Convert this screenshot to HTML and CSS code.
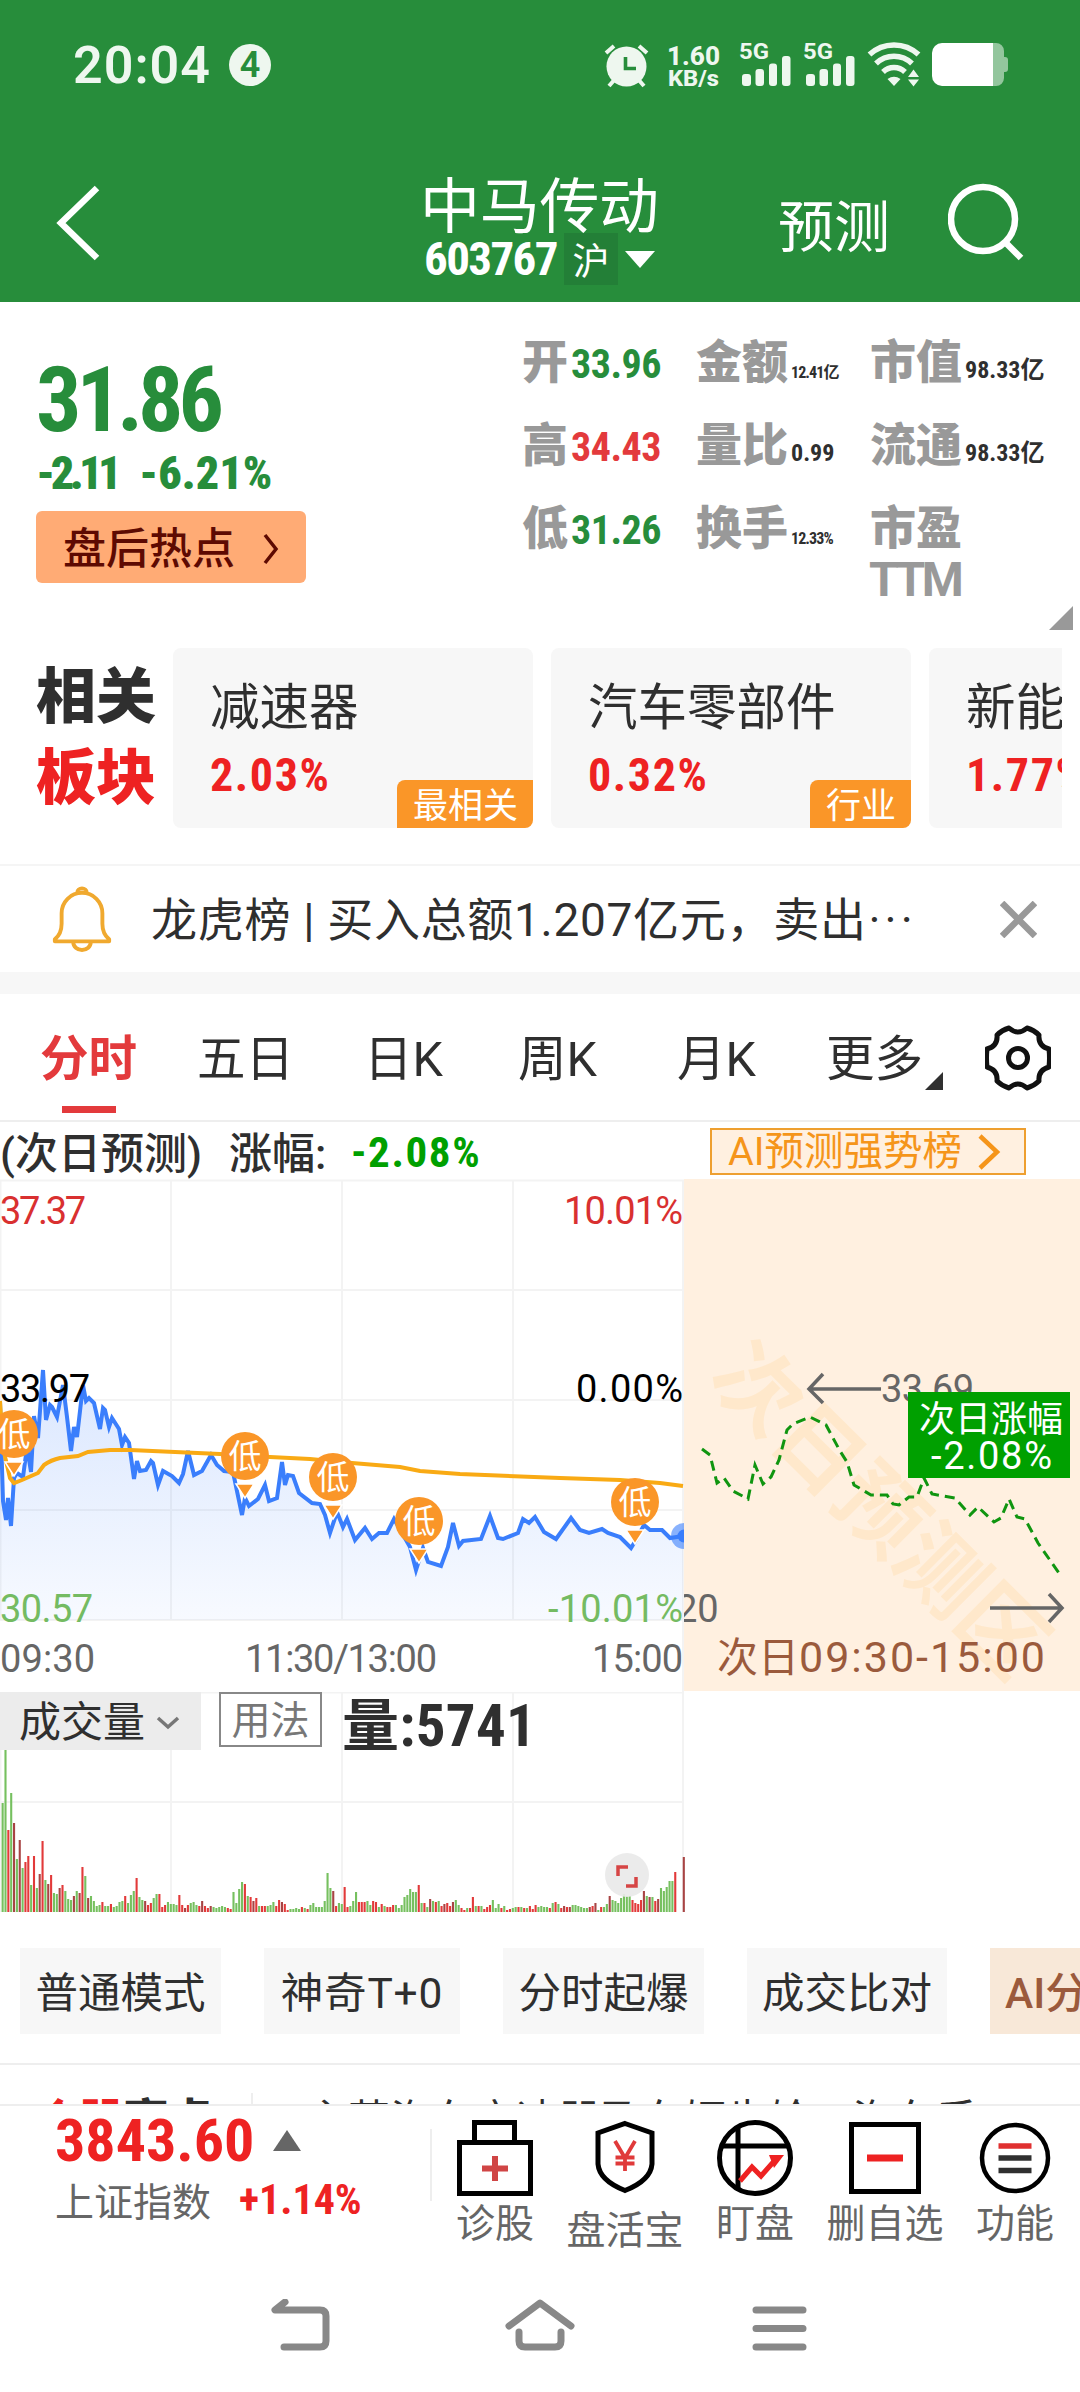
FILE: index.html
```html
<!DOCTYPE html>
<html lang="zh-CN">
<head>
<meta charset="utf-8">
<title>中马传动 603767</title>
<link rel="stylesheet" href="styles.css">
</head>
<body>
<header class="top">
  <div class="status">
    <span class="clock">20:04</span>
    <span class="count">4</span>
    <svg class="status-icons" width="440" height="70" viewBox="0 0 440 70" fill="#eef7ef">
      <circle cx="36.500" cy="36.500" r="20"/>
      <path d="M16 23l8-7M57 23l-8-7M19 56l7-8M54 56l-7-8" stroke="#eef7ef" stroke-width="4" fill="none"/>
      <path d="M35.500 27v11.500H46" stroke="#278d3b" stroke-width="3.600" fill="none"/>
      <text x="77" y="35" font-size="26" font-weight="800" textLength="53" lengthAdjust="spacingAndGlyphs">1.60</text>
      <text x="78" y="56" font-size="22" font-weight="800" textLength="51" lengthAdjust="spacingAndGlyphs">KB/s</text>
      <g id="sig">
        <text x="149" y="29" font-size="22" font-weight="700" textLength="30" lengthAdjust="spacingAndGlyphs">5G</text>
        <rect x="152" y="44" width="9" height="12" rx="3"/><rect x="165.500" y="39" width="8.500" height="17" rx="3"/><rect x="179" y="33.500" width="8" height="22.500" rx="3"/><rect x="192" y="26" width="8.500" height="30" rx="3"/>
      </g>
      <use href="#sig" x="64"/>
      <path d="M279.500 24.500a36 36 0 0 1 49 0M286 33.500a26 26 0 0 1 36 0M293 42a16 16 0 0 1 22 0" stroke="#eef7ef" stroke-width="5.500" fill="none"/>
      <path d="M297.500 49q6.500-4.500 13 0L304 56zM318 47l5.500-7.500L329 47zM318 49.500l5.500 7 5.500-7z"/>
      <path d="M352 13h51v43h-51a10 10 0 0 1-10-10V23a10 10 0 0 1 10-10z" fill="#fff"/>
      <path d="M403 13h3a8 8 0 0 1 8 8v6h1a3 3 0 0 1 3 3v9a3 3 0 0 1-3 3h-1v6a8 8 0 0 1-8 8h-3z" fill="#93c69d"/>
    </svg>
  </div>
  <nav class="titlebar">
    <svg class="back" width="48" height="80" viewBox="0 0 48 80"><path d="M43 5L7 40l36 35" fill="none" stroke="#fff" stroke-width="6.500"/></svg>
    <div class="stock">
      <h1>中马传动</h1>
      <div class="code"><b class="num">603767</b><span class="market">沪</span><svg width="30" height="17" viewBox="0 0 30 17"><path d="M0 0h30L15 17z" fill="#fff"/></svg></div>
    </div>
    <span class="predict">预测</span>
    <svg class="search" width="80" height="80" viewBox="0 0 80 80" fill="none" stroke="#fff" stroke-width="6.500"><circle cx="35" cy="36" r="32"/><path d="M57 59l16 16"/></svg>
  </nav>
</header>

<section class="quote">
  <div class="price">
    <b class="last num">31.86</b>
    <div class="change num"><b>-2.11</b><b>-6.21%</b></div>
    <div class="hot"><span>盘后热点</span><svg width="18" height="32" viewBox="0 0 18 32"><path d="M3 2l11 14L3 30" fill="none" stroke="#5e0a02" stroke-width="3.500"/></svg></div>
  </div>
  <div class="stats">
    <div><span>开</span><b class="num big">33.96</b></div>
    <div><span>金额</span><b class="num tiny">12.41亿</b></div>
    <div><span>市值</span><b class="num mid">98.33亿</b></div>
    <div><span>高</span><b class="num big up">34.43</b></div>
    <div><span>量比</span><b class="num mid">0.99</b></div>
    <div><span>流通</span><b class="num mid">98.33亿</b></div>
    <div><span>低</span><b class="num big">31.26</b></div>
    <div><span>换手</span><b class="num tiny">12.33%</b></div>
    <div class="ttm"><span>市盈<br><i>TTM</i></span></div>
  </div>
  <i class="corner"></i>
</section>

<section class="sectors">
  <h2>相关<em>板块</em></h2>
  <div class="cards">
    <article><p>减速器</p><b class="num">2.03%</b><span class="badge">最相关</span></article>
    <article><p>汽车零部件</p><b class="num">0.32%</b><span class="badge">行业</span></article>
    <article><p>新能源</p><b class="num">1.77%</b></article>
  </div>
</section>

<section class="notice">
  <svg width="62" height="66" viewBox="0 0 62 68" fill="none" stroke="#f0a92f" stroke-width="4"><path d="M3 55c5-4 7-9 7-16V28a21 21 0 0 1 42 0v11c0 7 2 12 7 16v2H3zM22 58a9 8 0 0 0 18 0M26 7a5 4.500 0 0 1 10 0" stroke-linejoin="round"/></svg>
  <span>龙虎榜 | 买入总额1.207亿元，卖出<i>···</i></span>
  <svg width="37" height="37" viewBox="0 0 37 37"><path d="M2 2l33 33M35 2L2 35" stroke="#999" stroke-width="6.500"/></svg>
</section>

<nav class="tabs">
  <span class="on">分时</span><span>五日</span><span>日K</span><span>周K</span><span>月K</span><span class="more">更多</span>
  <svg width="66" height="66" viewBox="0 0 66 66" fill="none" stroke="#111" stroke-width="5" stroke-linejoin="round"><path d="M24 3Q33 11 42 3Q49 5 54 10Q53 21 64 24Q65 33 64 42Q53 45 54 56Q49 61 42 63Q33 55 24 63Q17 61 12 56Q13 45 2 42Q1 33 2 24Q13 21 12 10Q17 5 24 3Z"/><circle cx="33" cy="33" r="9.500"/></svg>
</nav>

<section class="forecast">
  <span class="fl">(次日预测)</span><span class="fr">涨幅:</span><b class="num">-2.08%</b>
  <div class="rank">AI预测强势榜<svg width="24" height="36" viewBox="0 0 24 36"><path d="M3 2l17 16L3 34" fill="none" stroke="#f5951a" stroke-width="4.500"/></svg></div>
</section>

<svg class="chart" width="1080" height="513" viewBox="0 1179 1080 513">
  <defs>
    <linearGradient id="fade" x1="0" y1="1380" x2="0" y2="1620" gradientUnits="userSpaceOnUse"><stop offset="0" stop-color="#3a7efc" stop-opacity=".18"/><stop offset="1" stop-color="#3a7efc" stop-opacity=".04"/></linearGradient>
    <clipPath id="plot"><rect x="0" y="1179" width="684" height="513"/></clipPath>
    <clipPath id="next"><rect x="684" y="1179" width="396" height="513"/></clipPath>
    <g id="low"><path d="M-9 28H9L0 42z" fill="#fa9628" stroke="#fff" stroke-width="1.500"/><circle r="24" fill="#fa9628"/><text y="12" font-size="33" text-anchor="middle" fill="#fff">低</text></g>
  </defs>
  <path d="M0 1180.500H684M0 1290H684M0 1400H684M0 1510H684M0 1620H684M.500 1180V1620M171 1180V1620M342 1180V1620M513 1180V1620M683 1180V1692" stroke="#f3f3f3" stroke-width="2"/>
  <rect x="684" y="1179" width="396" height="512" fill="#fff0e0"/>
  <g clip-path="url(#next)"><text class="mark" transform="translate(881 1509) rotate(44.800)" text-anchor="middle" y="32" font-size="86" fill="#ffe8cb">次日预测区</text></g>
  <g clip-path="url(#plot)">
    <path id="area" fill="url(#fade)"/>
    <polyline id="line" fill="none" stroke="#3a7efc" stroke-width="4" points="0,1401 3,1501 6,1520 8,1498 11,1526 14,1478 17,1473 23,1477 27,1447 31,1472 34,1416 38,1438 43,1370 46,1420 50,1405 52,1407 57,1417 63,1385 67,1417 71,1451 74,1427 77,1437 83,1385 86,1401 89,1398 94,1403 100,1429 103,1408 105,1410 109,1427 112,1418 119,1429 122,1445 125,1437 129,1443 134,1479 137,1461 140,1471 146,1470 151,1461 153,1463 158,1485 163,1471 172,1476 179,1483 183,1474 188,1451 194,1475 202,1471 211,1455 217,1465 224,1471 233,1472 242,1515 245,1498 249,1506 258,1499 265,1485 269,1501 277,1498 282,1462 285,1485 288,1475 293,1476 299,1493 312,1503 320,1504 325,1515 330,1533 337,1512 343,1527 347,1519 355,1540 365,1528 372,1539 379,1533 387,1533 394,1519 402,1533 410,1547 416,1570 423,1548 428,1562 441,1566 448,1547 453,1523 459,1546 463,1541 481,1539 490,1516 498,1538 503,1539 518,1533 523,1519 529,1523 535,1517 544,1532 556,1539 571,1518 580,1530 589,1533 602,1529 608,1533 620,1537 631,1548 636,1540 644,1525 650,1530 662,1530 670,1538 683,1536"/>
    <path d="M0 1401L3 1448 10 1478 14 1483 22 1480 38 1473 44 1465Q51 1460 60 1458L78 1456 88 1452 110 1450H130L220 1454 270 1457 310 1459 352 1463 400 1467 420 1471 460 1474 560 1478 620 1480 660 1483 683 1486" fill="none" stroke="#f9aa14" stroke-width="4"/>
    <circle cx="684" cy="1536" r="13" fill="#3a7efc" opacity=".6"/><circle cx="684" cy="1536" r="6.500" fill="#3a7efc"/>
    <use href="#low" x="14" y="1434"/><use href="#low" x="245" y="1456"/><use href="#low" x="333" y="1477"/><use href="#low" x="419" y="1521"/><use href="#low" x="635" y="1502"/>
  </g>
  <g class="axis" font-size="38">
    <text x="0" y="1224" textLength="86" fill="#d93030">37.37</text><text x="564" y="1224" textLength="119" fill="#d93030">10.01%</text>
    <text x="0" y="1402" textLength="90" fill="#000">33.97</text><text x="576" y="1402" textLength="107" fill="#000">0.00%</text>
    <text x="0" y="1622" textLength="93" fill="#74bb62">30.57</text><text x="548" y="1622" textLength="135" fill="#74bb62">-10.01%</text>
    <g fill="#666"><text x="0" y="1672" textLength="95">09:30</text><text x="245" y="1672" textLength="192">11:30/13:00</text><text x="592" y="1672" textLength="91">15:00</text>
    <text x="881" y="1402" textLength="93">33.69</text></g>
    <g clip-path="url(#next)"><text x="676" y="1622" fill="#666">20</text></g>
  </g>
  <path d="M881 1389H810M823 1374L809 1389 823 1403M990 1608H1061M1049 1594L1062 1608 1049 1622" fill="none" stroke="#666" stroke-width="3.500"/>
  <polyline fill="none" stroke="#109510" stroke-width="3" stroke-dasharray="10 6" points="702,1449 710,1455 717,1483 724,1478 733,1491 748,1499 755,1465 763,1484 771,1477 779,1460 787,1430 793,1424 810,1417 826,1425 840,1451 847,1462 854,1485 871,1495 887,1495 893,1504 899,1505 909,1497 917,1497 924,1478 932,1494 955,1498 970,1515 978,1507 994,1522 1001,1518 1009,1499 1017,1517 1025,1519 1038,1543 1061,1576"/>
  <rect x="908" y="1392" width="162" height="86" fill="#00a000"/>
  <text x="991" y="1432" font-size="36" text-anchor="middle" fill="#fff">次日涨幅</text>
  <text x="931" y="1469" font-size="38" textLength="121" fill="#fff">-2.08%</text>
  <text x="717" y="1672" font-size="43" fill="#9b5a3c"><tspan font-size="41">次日</tspan><tspan textLength="246">09:30-15:00</tspan></text>
</svg>

<section class="volume">
  <svg width="1080" height="222" viewBox="0 1692 1080 222">
    <path d="M0 1692.500H684M0 1802H684M.500 1692V1912M171 1692V1912M342 1692V1912M513 1692V1912M683 1692V1912" stroke="#f3f3f3" stroke-width="2"/>
    <g id="bars"></g>
    <circle cx="627" cy="1875" r="22" fill="#e9e9e9" opacity=".92"/>
    <path d="M618 1876V1867H628M636 1877V1886H626" fill="none" stroke="#d64545" stroke-width="3.500"/>
  </svg>
  <div class="tools">
    <span class="pick">成交量<svg width="24" height="14" viewBox="0 0 24 14"><path d="M2 2l10 9L22 2" fill="none" stroke="#777" stroke-width="3.500"/></svg></span>
    <span class="usage">用法</span>
    <b class="vol num"><i>量</i>:5741</b>
  </div>
</section>

<div class="modes"><span>普通模式</span><span class="t0">神奇T+0</span><span>分时起爆</span><span>成交比对</span><span class="ai">AI分时</span></div>

<section class="highlight"><b><em>个股</em>亮点</b><span>主营汽车变速器及车辆齿轮，汽车手</span></section>

<footer class="dock">
  <div class="index">
    <div><b class="num value">3843.60</b><svg width="28" height="21" viewBox="0 0 28 21"><path d="M14 0l14 21H0z" fill="#666"/></svg></div>
    <div><span>上证指数</span><b class="num pct">+1.14%</b></div>
  </div>
  <div class="actions">
    <a><svg width="76" height="76" viewBox="0 0 76 76" fill="none" stroke="#000" stroke-width="5"><path d="M2.500 22.500h71v51h-71zM17.500 22V2.500h40V22"/><path d="M38 36v25M25 48.500h26" stroke="#d04545" stroke-width="6"/></svg>诊股</a>
    <a class="low"><svg width="76" height="76" viewBox="0 0 76 76" fill="none" stroke="#000" stroke-width="5"><path d="M38 3.500L65 13v31C64 56 52 65 38 70.500C24 65 12 56 11 44V13z"/><path d="M28 21l10 17 10-17M38 38v13M28.500 37.500h19M28.500 43.500h19" stroke="#e03a3a" stroke-width="3.800"/></svg>盘活宝</a>
    <a><svg width="76" height="76" viewBox="0 0 76 76" fill="none" stroke="#000" stroke-width="5"><circle cx="38" cy="38" r="35.500"/><path d="M21 7v62M6 26h65"/><path d="M23 61l12-14 9 9 15-17" stroke="#ee2222"/><path d="M52 35h15L57 48z" fill="#ee2222" stroke="none"/></svg>盯盘</a>
    <a><svg width="76" height="76" viewBox="0 0 76 76" fill="none" stroke="#000" stroke-width="5"><path d="M4.500 4.500h67v67h-67z"/><path d="M20 38h36" stroke="#ee2222" stroke-width="7"/></svg>删自选</a>
    <a><svg width="76" height="76" viewBox="0 0 76 76" fill="none" stroke="#000" stroke-width="4.500"><circle cx="38" cy="38" r="33"/><path d="M21.500 26h33" stroke="#e03030" stroke-width="5.500"/><path d="M21.500 38h33M21.500 50.500h33" stroke="#303030" stroke-width="5.500"/></svg>功能</a>
  </div>
</footer>

<nav class="system">
  <svg width="60" height="52" viewBox="0 0 60 52"><path d="M15 3L5 11H50q6 0 6 6V42q0 6-6 6H14" /></svg>
  <svg width="70" height="52" viewBox="0 0 70 52"><path d="M4 27L35 4 66 27M14 33V42q0 6 6 6H50q6 0 6-6V33"/></svg>
  <svg width="56" height="52" viewBox="0 0 56 52"><path d="M4 11H51M4 29.500H51M4 48H51"/></svg>
</nav>
<script src="script.js"></script>
</body>
</html>
```
FILE: script.js
```js
// One entry per minute: colour key and bar height
const volumes = `g109 g163 r82 g119 d89 g53 d72 g44 r50 r56 g27 r56 g24 d38 r71 g32 d28 r37 g19 g18
d24 r27 g21 g13 g12 d16 g21 d19 r45 g36 d14 g16 g11 g6 g7 r10 g6 g6 r8 g5
g6 g10 g11 r16 g9 g17 g21 r34 g15 g12 d11 r7 r9 g14 g18 r18 r5 r7 g10 g8
g8 g7 r17 r7 d4 r7 g9 g10 g7 r6 d11 r6 r4 d6 g5 g4 g5 g6 g5 r4
r3 g20 g9 g23 g30 r28 g16 r15 d11 r14 g6 r6 r6 g6 g7 g10 r6 r12 d10 r8
r2 g3 g3 g4 g3 r5 g4 r3 g7 g9 g5 g5 g5 g11 g39 g24 d21 r6 g9 g8
r25 r5 g6 g11 g20 r10 r10 r10 g11 g7 r11 r10 g5 r8 g6 r5 r5 r7 g7 g4
g7 g15 g17 g23 g20 g20 r27 g9 r9 g5 d13 g11 r10 g11 r6 d8 r9 r6 d10 g12
g7 r4 r2 g4 r4 r15 g6 r6 g6 r3 r5 r7 g12 g4 g8 r4 g6 r2 r3 g4
g5 r5 g5 r4 g4 r6 r3 r7 g5 g6 g5 g5 r4 g9 r10 g8 r4 d6 r5 d5
g7 g7 g6 g5 g4 g4 d5 r6 d9 g2 r5 g5 g8 d16 g12 g11 g9 g14 g18 g16
g16 r12 r9 r8 r12 d21 g16 d15 g15 r11 d13 g24 g21 g25 g31 g31 r40 g0 g0 d55`.split(/\s+/);
const colors = { g: '#76c05f', r: '#e23a3a', d: '#a84444' };
document.getElementById('bars').innerHTML = volumes.map((v, i) => {
  const h = +v.slice(1);
  return `<rect x="${(1.6 + i * 2.85).toFixed(2)}" y="${1912 - h}" width="2.1" height="${h}" fill="${colors[v[0]]}"/>`;
}).join('');
const points = document.getElementById('line').getAttribute('points').trim().split(/\s+/);
document.getElementById('area').setAttribute('d', `M0,1620 L${points.join(' L')} L683,1620Z`);
```
FILE: styles.css
```css
* { box-sizing: border-box; }
body { margin: 0; width: 1080px; height: 2392px; overflow: hidden; background: #fff; color: #2f2f2f; font-family: Roboto, "Noto Sans CJK SC", sans-serif; }
h1, h2, p { margin: 0; font-weight: 400; }
em, i { font-style: normal; }
svg { display: block; flex: none; }
.num { font-family: "Roboto Condensed", Roboto, "Noto Sans CJK SC", sans-serif; font-weight: 700; }

.top { height: 302px; background: #278d3b; color: #fff; }
.status { display: flex; align-items: center; height: 130px; padding-left: 73px; color: #eef7ef; }
.clock { width: 156px; padding-top: 2px; font-size: 52px; font-weight: 600; letter-spacing: 1px; line-height: 60px; }
.count { width: 42px; height: 42px; border-radius: 50%; background: #eef7ef; color: #278d3b; font-size: 36px; font-weight: 600; line-height: 43px; text-align: center; }
.status-icons { margin-left: 319px; }
.titlebar { display: grid; grid-template-columns: 420px 358px 170px 132px; height: 172px; }
.back { margin: 53px 0 0 54px; }
.stock h1 { margin-top: 45px; font-size: 60px; line-height: 66px; letter-spacing: -.3px; }
.code { display: flex; align-items: center; height: 52px; margin-top: -8px; padding-left: 4px; }
.code b { width: 140px; font-size: 47px; line-height: 52px; letter-spacing: -1.6px; }
.market { width: 54px; height: 52px; margin-right: 7px; background: #237f37; font-size: 37px; line-height: 59px; text-align: center; }
.predict { margin-top: 63px; font-size: 56px; line-height: 70px; }
.search { margin-top: 53px; }

.quote { position: relative; display: flex; height: 346px; }
.price { width: 523px; padding-left: 36px; }
.last { display: block; margin-top: 53px; font-size: 90px; line-height: 92px; letter-spacing: -5px; color: #278d3b; }
.change { display: flex; gap: 22px; height: 50px; margin-top: 1px; font-size: 46px; line-height: 50px; color: #278d3b; }
.change b:first-child { letter-spacing: -4.6px; }
.hot { display: flex; align-items: center; gap: 27px; width: 270px; height: 72px; margin-top: 13px; padding: 3px 0 0 27px; border-radius: 6px; background: #ffab75; color: #5e0a02; font-size: 43px; font-weight: 500; line-height: 72px; }
.stats { display: grid; grid-template-columns: 174px 174px 200px; grid-template-rows: 83px 83px 130px; margin: 30px 0 0 -1px; }
.stats div { display: flex; align-items: baseline; line-height: 60px; white-space: nowrap; }
.stats span { color: #999; font-size: 46px; font-weight: 900; }
.stats .ttm { line-height: 52px; margin-top: 4px; }
.ttm i { font-size: 48px; font-weight: 700; letter-spacing: -3.5px; margin-left: -1px; }
.big { margin-left: 3px; font-size: 40px; letter-spacing: -.5px; color: #278d3b; }
.big.up { color: #e33a3c; }
.mid { margin-left: 3px; font-size: 24px; }
.tiny { margin-left: 3px; font-size: 16px; letter-spacing: -.9px; }
.corner { position: absolute; left: 1049px; top: 304px; width: 24px; height: 24px; background: #999; clip-path: polygon(100% 0, 100% 100%, 0 100%); }

.sectors { display: flex; height: 216px; padding: 0 18px 0 36px; }
.sectors h2 { width: 137px; padding-top: 9px; font-size: 60px; font-weight: 900; line-height: 81px; }
.sectors em { display: block; color: #ee2222; }
.cards { display: flex; gap: 18px; width: 889px; height: 180px; overflow: hidden; }
.cards article { position: relative; flex: none; width: 360px; padding: 30px 0 0 37px; border-radius: 8px; background: #f7f7f7; }
.cards p { font-size: 49.5px; line-height: 60px; }
.cards b { display: block; margin-top: 9px; font-size: 46px; line-height: 56px; letter-spacing: 1.6px; color: #ee2222; }
.badge { position: absolute; right: 0; bottom: 0; height: 48px; padding: 0 15px 0 16px; border-radius: 8px 0; background: #fa9628; color: #fff; font-size: 35px; line-height: 53px; }

.notice { display: flex; align-items: center; height: 130px; padding-left: 51px; border-top: 2px solid #f5f5f5; border-bottom: 22px solid #f7f7f7; }
.notice span { width: 849px; margin-left: 38px; padding-top: 2px; font-size: 46px; line-height: 60px; letter-spacing: .7px; white-space: nowrap; }
.notice i { letter-spacing: 4px; margin-left: 2px; }

.tabs { position: relative; display: grid; grid-template-columns: 157px 167px 154px 159px 149px 159px 66px; height: 128px; padding: 30px 0 0 40px; border-bottom: 2px solid #eee; font-size: 48.5px; line-height: 72px; }
.tabs svg { margin-top: 1px; }
.tabs .on { position: relative; color: #e33a3c; font-weight: 700; }
.tabs .on::after { content: ""; position: absolute; left: 22px; top: 82px; width: 54px; height: 7px; background: #e33a3c; }
.tabs .more { position: relative; }
.tabs .more::after { content: ""; position: absolute; left: 99px; top: 48px; width: 18px; height: 18px; background: #303030; clip-path: polygon(100% 0, 100% 100%, 0 100%); }

.forecast { display: flex; align-items: center; height: 57px; padding: 5px 54px 0 0; font-size: 43px; line-height: 52px; font-weight: 500; }
.fl { width: 229px; padding-top: 1px; }
.fr { width: 122px; padding-top: 1px; }
.forecast b { margin-top: -2px; font-size: 43px; letter-spacing: 1.6px; color: #00a000; }
.rank { display: flex; align-items: center; justify-content: space-between; width: 316px; height: 47px; margin: -3px 0 0 auto; padding: 0 23px 0 16px; border: 2px solid #ee9f2f; background: #fff0e0; color: #f5951a; font-size: 39.5px; font-weight: 400; line-height: 44px; }

.mark { font-weight: 700; }
.volume { position: relative; height: 222px; }
.tools { position: absolute; left: 0; top: 0; display: flex; align-items: flex-start; }
.pick { display: flex; align-items: center; gap: 11px; width: 201px; height: 58px; margin-right: 18px; padding: 3px 0 0 19px; background: #ececec; font-size: 42px; line-height: 60px; }
.usage { width: 103px; height: 55px; margin-right: 20px; border: 2px solid #888; background: #fff; color: #777; font-size: 39px; line-height: 54px; text-align: center; }
.vol { font-size: 59px; line-height: 68px; letter-spacing: .3px; }
.vol i { font-size: 57px; }

.modes { display: grid; grid-template-columns: 201px 196px 201px 200px 200px; gap: 43px; height: 149px; padding: 34px 0 29px 20px; overflow: hidden; font-size: 42.5px; line-height: 91px; text-align: center; white-space: nowrap; }
.modes span { height: 86px; background: #f7f7f7; }
.modes .t0 { letter-spacing: .8px; }
.modes .ai { padding-left: 15px; background: #f8e8d8; color: #9b5a3c; font-weight: 500; text-align: left; }

.highlight { display: flex; height: 41px; padding: 28px 0 0 36px; overflow: hidden; border-top: 2px solid #eee; line-height: 56px; white-space: nowrap; }
.highlight b { width: 215px; font-size: 44px; font-weight: 900; }
.highlight em { color: #ee2222; }
.highlight span { padding-left: 53px; border-left: 2px solid #eee; font-size: 42px; }

.dock { display: flex; height: 166px; border-top: 2px solid #eee; background: #fff; }
.index { width: 430px; height: 96px; padding: 2px 0 0 55px; color: #666; }
.index div { display: flex; align-items: center; height: 65px; }
.index div + div { height: 60px; margin-top: -4px; }
.value { width: 218px; font-size: 60px; color: #ee2222; }
.index span { width: 184px; font-size: 39px; }
.pct { font-size: 42px; color: #ee2222; }
.actions { position: relative; display: grid; grid-template-columns: 130px 130px 130px 130px 130px; margin-top: 14px; }
.actions::before { content: ""; position: absolute; left: 0; top: 9px; width: 2px; height: 72px; background: #eee; }
.actions a { display: flex; flex-direction: column; align-items: center; color: #666; font-size: 39px; line-height: 57px; white-space: nowrap; }
.actions .low svg { margin-bottom: 7px; }

.system { display: flex; height: 122px; padding: 29px 0 0 270px; fill: none; stroke: #888; stroke-width: 7; stroke-linecap: round; stroke-linejoin: round; }
.system svg:nth-child(2) { margin: 0 177px 0 175px; }
```
